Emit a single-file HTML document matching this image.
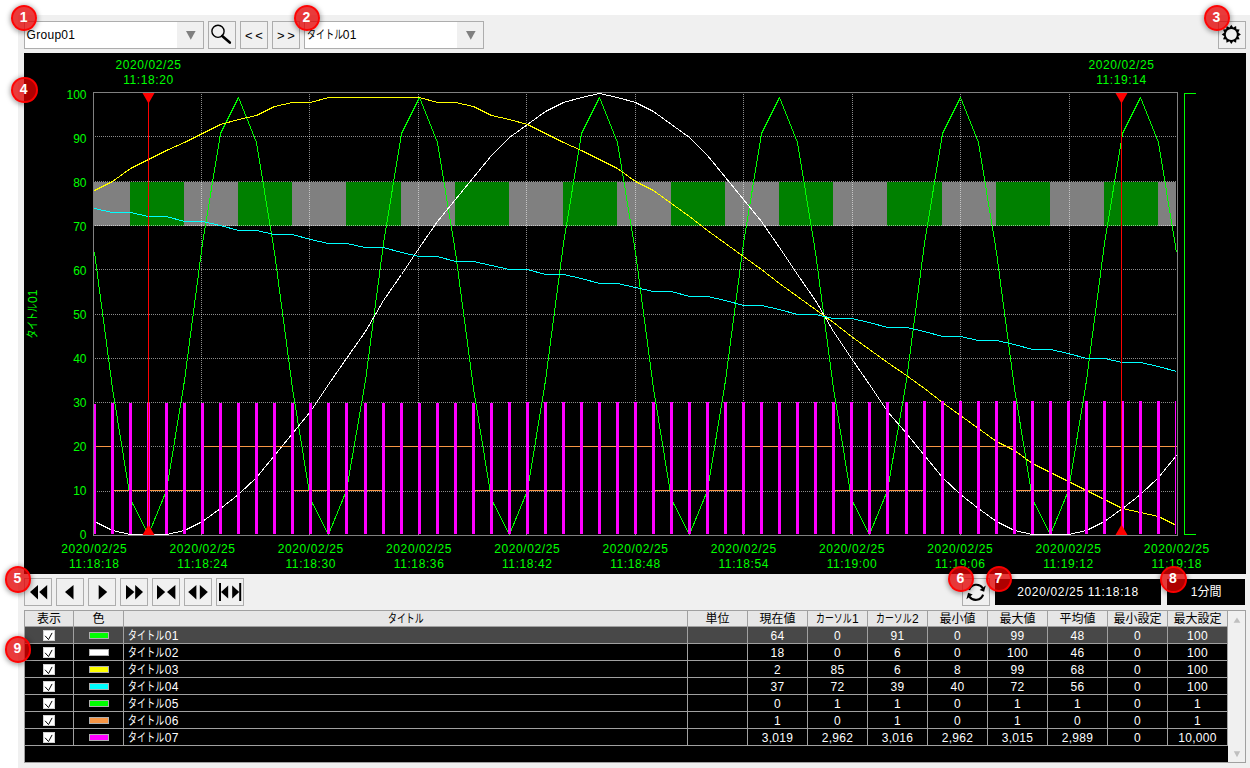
<!DOCTYPE html><html lang="ja"><head><meta charset="utf-8"><title>Trend</title><style>
html,body{margin:0;padding:0;}
body{width:1250px;height:768px;overflow:hidden;background:#fff;position:relative;
 font-family:"Liberation Sans","Noto Sans CJK JP",sans-serif;font-size:12px;color:#000;}
.abs{position:absolute;box-sizing:border-box;}
#panel{left:18px;top:15px;width:1232px;height:753px;background:#f0f0f0;}
.combo{background:#fff;border:1px solid #adadad;height:28px;line-height:27px;padding-left:1.5px;white-space:nowrap;letter-spacing:.3px;}
.combo .dd{position:absolute;right:0;top:0;width:26px;height:26px;background:#f0f0f0;}
.combo .dd svg{position:absolute;left:9px;top:9px;}
.btn{background:#f0f0f0;border:1px solid #adadad;width:28px;height:28px;}
.btn svg{position:absolute;left:0;top:0;}
.kana{display:inline-block;transform:scaleX(.74);transform-origin:0 50%;white-space:nowrap;}
.blk{background:#000;color:#fff;text-align:center;line-height:26px;height:26.4px;}
#chart{position:absolute;left:24px;top:53px;}
.badge{position:absolute;width:26.8px;height:26.8px;box-sizing:border-box;border-radius:50%;
 background:rgba(226,0,0,.77);border:2px solid rgba(255,0,0,.92);color:#fff;font-weight:bold;
 font-size:14px;line-height:20.8px;padding-right:1px;text-align:center;box-shadow:0 1px 5px 1px rgba(0,0,0,.35);}
#tbl{left:24px;top:610px;width:1222px;height:153px;background:#000;border:1px solid #a0a0a0;overflow:hidden;}
.hc{position:absolute;top:0;height:16px;box-sizing:border-box;background:#e6e6e6;border-right:1px solid #a0a0a0;
 border-bottom:1px solid #a0a0a0;text-align:center;line-height:17px;white-space:nowrap;overflow:hidden;}
.c{position:absolute;height:17px;box-sizing:border-box;border-right:1px solid #a0a0a0;border-bottom:1px solid #a0a0a0;
 color:#fff;text-align:center;line-height:18px;white-space:nowrap;overflow:hidden;letter-spacing:.3px;}
.c.l{text-align:left;padding-left:4px;}
.sel{background:#484848;}
.cb{position:absolute;left:18px;top:3px;width:12px;height:11px;background:#fff;border:1px solid #d0d0d0;box-sizing:border-box;}
.cb svg{position:absolute;left:0;top:0;}
.sw{position:absolute;left:15px;top:5px;width:20px;height:7px;box-sizing:border-box;border:1px solid #b0b0b0;}
#sb{left:1203px;top:0;width:18px;height:152px;background:#f0f0f0;position:absolute;}
</style></head><body>
<div id="panel" class="abs"></div>
<div class="abs combo" style="left:24px;top:21px;width:180px">Group01<span class="dd"><svg width="10" height="9" viewBox="0 0 10 9"><polygon points="0,0 9.6,0 4.8,8.8" fill="#808080"/></svg></span></div>
<div class="abs btn" style="left:208px;top:21px;width:28px;height:28px"><svg width="26" height="26" viewBox="0 0 26 26"><circle cx="9" cy="9.3" r="6.1" fill="none" stroke="#000" stroke-width="1.4"/><line x1="13.2" y1="14" x2="20.8" y2="20.6" stroke="#000" stroke-width="2.6" stroke-linecap="round"/></svg></div>
<div class="abs btn" style="left:240px;top:21px;font-size:13px;line-height:27px;text-align:center;letter-spacing:2.6px;padding-left:2.6px">&lt;&lt;</div>
<div class="abs btn" style="left:272px;top:21px;font-size:13px;line-height:27px;text-align:center;letter-spacing:2.6px;padding-left:2.6px">&gt;&gt;</div>
<div class="abs combo" style="left:304px;top:21px;width:180px"><span class="kana">タイトル</span><span style="margin-left:-13px">01</span><span class="dd"><svg width="10" height="9" viewBox="0 0 10 9"><polygon points="0,0 9.6,0 4.8,8.8" fill="#808080"/></svg></span></div>
<div class="abs btn" style="left:1218px;top:21px;width:28px;height:28px"><svg width="26" height="26" viewBox="0 0 26 26"><path d="M12.30,2.80 L14.16,5.45 L17.10,4.09 L17.39,7.31 L20.61,7.60 L19.25,10.54 L21.90,12.40 L19.25,14.26 L20.61,17.20 L17.39,17.49 L17.10,20.71 L14.16,19.35 L12.30,22.00 L10.44,19.35 L7.50,20.71 L7.21,17.49 L3.99,17.20 L5.35,14.26 L2.70,12.40 L5.35,10.54 L3.99,7.60 L7.21,7.31 L7.50,4.09 L10.44,5.45 Z M12.30,6.90 a5.5,5.5 0 1,0 0.01,0 Z" fill="#000" fill-rule="evenodd"/></svg></div>
<svg id="chart" width="1222" height="521" viewBox="24 53 1222 521" shape-rendering="crispEdges">
<rect x="24" y="53" width="1222" height="521" fill="#000"/>
<rect x="94" y="182" width="36" height="44" fill="#808080"/>
<rect x="130" y="182" width="54" height="44" fill="#008000"/>
<rect x="184" y="182" width="54" height="44" fill="#808080"/>
<rect x="238" y="182" width="54" height="44" fill="#008000"/>
<rect x="292" y="182" width="54" height="44" fill="#808080"/>
<rect x="346" y="182" width="55" height="44" fill="#008000"/>
<rect x="401" y="182" width="54" height="44" fill="#808080"/>
<rect x="455" y="182" width="54" height="44" fill="#008000"/>
<rect x="509" y="182" width="54" height="44" fill="#808080"/>
<rect x="563" y="182" width="54" height="44" fill="#008000"/>
<rect x="617" y="182" width="54" height="44" fill="#808080"/>
<rect x="671" y="182" width="54" height="44" fill="#008000"/>
<rect x="725" y="182" width="54" height="44" fill="#808080"/>
<rect x="779" y="182" width="54" height="44" fill="#008000"/>
<rect x="833" y="182" width="54" height="44" fill="#808080"/>
<rect x="887" y="182" width="55" height="44" fill="#008000"/>
<rect x="942" y="182" width="54" height="44" fill="#808080"/>
<rect x="996" y="182" width="54" height="44" fill="#008000"/>
<rect x="1050" y="182" width="54" height="44" fill="#808080"/>
<rect x="1104" y="182" width="54" height="44" fill="#008000"/>
<rect x="1158" y="182" width="18" height="44" fill="#808080"/>
<line x1="95" y1="491.5" x2="1177" y2="491.5" stroke="rgba(255,255,255,.55)" stroke-width="1" stroke-dasharray="1 1"/>
<line x1="95" y1="446.5" x2="1177" y2="446.5" stroke="rgba(255,255,255,.55)" stroke-width="1" stroke-dasharray="1 1"/>
<line x1="95" y1="402.5" x2="1177" y2="402.5" stroke="rgba(255,255,255,.55)" stroke-width="1" stroke-dasharray="1 1"/>
<line x1="95" y1="358.5" x2="1177" y2="358.5" stroke="rgba(255,255,255,.55)" stroke-width="1" stroke-dasharray="1 1"/>
<line x1="95" y1="314.5" x2="1177" y2="314.5" stroke="rgba(255,255,255,.55)" stroke-width="1" stroke-dasharray="1 1"/>
<line x1="95" y1="269.5" x2="1177" y2="269.5" stroke="rgba(255,255,255,.55)" stroke-width="1" stroke-dasharray="1 1"/>
<line x1="95" y1="225.5" x2="1177" y2="225.5" stroke="rgba(255,255,255,.55)" stroke-width="1" stroke-dasharray="1 1"/>
<line x1="95" y1="181.5" x2="1177" y2="181.5" stroke="rgba(255,255,255,.55)" stroke-width="1" stroke-dasharray="1 1"/>
<line x1="95" y1="136.5" x2="1177" y2="136.5" stroke="rgba(255,255,255,.55)" stroke-width="1" stroke-dasharray="1 1"/>
<line x1="201.5" y1="94" x2="201.5" y2="535" stroke="rgba(255,255,255,.55)" stroke-width="1" stroke-dasharray="1 1"/>
<line x1="309.5" y1="94" x2="309.5" y2="535" stroke="rgba(255,255,255,.55)" stroke-width="1" stroke-dasharray="1 1"/>
<line x1="418.5" y1="94" x2="418.5" y2="535" stroke="rgba(255,255,255,.55)" stroke-width="1" stroke-dasharray="1 1"/>
<line x1="526.5" y1="94" x2="526.5" y2="535" stroke="rgba(255,255,255,.55)" stroke-width="1" stroke-dasharray="1 1"/>
<line x1="635.5" y1="94" x2="635.5" y2="535" stroke="rgba(255,255,255,.55)" stroke-width="1" stroke-dasharray="1 1"/>
<line x1="743.5" y1="94" x2="743.5" y2="535" stroke="rgba(255,255,255,.55)" stroke-width="1" stroke-dasharray="1 1"/>
<line x1="852.5" y1="94" x2="852.5" y2="535" stroke="rgba(255,255,255,.55)" stroke-width="1" stroke-dasharray="1 1"/>
<line x1="960.5" y1="94" x2="960.5" y2="535" stroke="rgba(255,255,255,.55)" stroke-width="1" stroke-dasharray="1 1"/>
<line x1="1069.5" y1="94" x2="1069.5" y2="535" stroke="rgba(255,255,255,.55)" stroke-width="1" stroke-dasharray="1 1"/>
<polyline points="94.5,252.5 112.5,388.5 130.5,499.5 148.5,534.5 166.5,490.5 184.5,380.5 202.5,243.5 220.5,133.5 238.5,97.5 256.5,142.5 274.5,252.5 292.5,388.5 310.5,499.5 328.5,534.5 346.5,490.5 365.5,380.5 383.5,243.5 401.5,133.5 419.5,97.5 437.5,142.5 455.5,252.5 473.5,388.5 491.5,499.5 509.5,534.5 527.5,490.5 545.5,380.5 563.5,243.5 581.5,133.5 599.5,97.5 617.5,142.5 635.5,252.5 653.5,388.5 671.5,499.5 689.5,534.5 707.5,490.5 725.5,380.5 743.5,243.5 761.5,133.5 779.5,97.5 797.5,142.5 815.5,252.5 833.5,388.5 851.5,499.5 869.5,534.5 887.5,490.5 906.5,380.5 924.5,243.5 942.5,133.5 960.5,97.5 978.5,142.5 996.5,252.5 1014.5,388.5 1032.5,499.5 1050.5,534.5 1068.5,490.5 1086.5,380.5 1104.5,243.5 1122.5,133.5 1140.5,97.5 1158.5,142.5 1176.5,252.5" fill="none" stroke="#00ff00" stroke-width="1" stroke-linejoin="bevel" />
<polyline points="94.5,521.5 112.5,530.5 130.5,534.5 148.5,534.5 166.5,534.5 184.5,530.5 202.5,521.5 220.5,508.5 238.5,494.5 256.5,477.5 274.5,455.5 292.5,433.5 310.5,411.5 328.5,384.5 346.5,358.5 365.5,331.5 383.5,300.5 401.5,274.5 419.5,247.5 437.5,221.5 455.5,199.5 473.5,177.5 491.5,155.5 509.5,137.5 527.5,124.5 545.5,111.5 563.5,102.5 581.5,97.5 599.5,93.5 617.5,97.5 635.5,102.5 653.5,111.5 671.5,124.5 689.5,137.5 707.5,155.5 725.5,177.5 743.5,199.5 761.5,221.5 779.5,247.5 797.5,274.5 815.5,300.5 833.5,331.5 851.5,358.5 869.5,384.5 887.5,411.5 906.5,433.5 924.5,455.5 942.5,477.5 960.5,494.5 978.5,508.5 996.5,521.5 1014.5,530.5 1032.5,534.5 1050.5,534.5 1068.5,534.5 1086.5,530.5 1104.5,521.5 1122.5,508.5 1140.5,494.5 1158.5,477.5 1176.5,455.5" fill="none" stroke="#ffffff" stroke-width="1" stroke-linejoin="bevel" />
<polyline points="94.5,190.5 112.5,181.5 130.5,168.5 148.5,159.5 166.5,150.5 184.5,142.5 202.5,133.5 220.5,124.5 238.5,119.5 256.5,115.5 274.5,106.5 292.5,102.5 310.5,102.5 328.5,97.5 346.5,97.5 365.5,97.5 383.5,97.5 401.5,97.5 419.5,97.5 437.5,102.5 455.5,102.5 473.5,106.5 491.5,115.5 509.5,119.5 527.5,124.5 545.5,133.5 563.5,142.5 581.5,150.5 599.5,159.5 617.5,168.5 635.5,181.5 653.5,190.5 671.5,203.5 689.5,216.5 707.5,230.5 725.5,243.5 743.5,256.5 761.5,269.5 779.5,283.5 797.5,296.5 815.5,309.5 833.5,322.5 851.5,336.5 869.5,349.5 887.5,362.5 906.5,375.5 924.5,388.5 942.5,402.5 960.5,415.5 978.5,428.5 996.5,441.5 1014.5,450.5 1032.5,463.5 1050.5,472.5 1068.5,481.5 1086.5,490.5 1104.5,499.5 1122.5,508.5 1140.5,512.5 1158.5,516.5 1176.5,525.5" fill="none" stroke="#ffff00" stroke-width="1" stroke-linejoin="bevel" />
<polyline points="94.5,208.5 112.5,212.5 130.5,212.5 148.5,216.5 166.5,216.5 184.5,221.5 202.5,221.5 220.5,225.5 238.5,230.5 256.5,230.5 274.5,234.5 292.5,234.5 310.5,239.5 328.5,243.5 346.5,243.5 365.5,247.5 383.5,247.5 401.5,252.5 419.5,256.5 437.5,256.5 455.5,261.5 473.5,261.5 491.5,265.5 509.5,269.5 527.5,269.5 545.5,274.5 563.5,274.5 581.5,278.5 599.5,283.5 617.5,283.5 635.5,287.5 653.5,291.5 671.5,291.5 689.5,296.5 707.5,296.5 725.5,300.5 743.5,305.5 761.5,305.5 779.5,309.5 797.5,314.5 815.5,314.5 833.5,318.5 851.5,318.5 869.5,322.5 887.5,327.5 906.5,327.5 924.5,331.5 942.5,336.5 960.5,336.5 978.5,340.5 996.5,340.5 1014.5,344.5 1032.5,349.5 1050.5,349.5 1068.5,353.5 1086.5,358.5 1104.5,358.5 1122.5,362.5 1140.5,362.5 1158.5,366.5 1176.5,371.5" fill="none" stroke="#00ffff" stroke-width="1" stroke-linejoin="bevel" />
<polyline points="94.5,446.5 112.5,446.5 112.5,490.5 202.5,490.5 202.5,446.5 292.5,446.5 292.5,490.5 383.5,490.5 383.5,446.5 473.5,446.5 473.5,490.5 563.5,490.5 563.5,446.5 653.5,446.5 653.5,490.5 743.5,490.5 743.5,446.5 833.5,446.5 833.5,490.5 924.5,490.5 924.5,446.5 1014.5,446.5 1014.5,490.5 1104.5,490.5 1104.5,446.5 1176.5,446.5" fill="none" stroke="#f79646" stroke-width="1" stroke-linejoin="bevel" />
<rect x="94" y="404" width="2" height="130" fill="#ff00ff"/>
<rect x="111" y="403" width="3" height="131" fill="#ff00ff"/>
<rect x="129" y="403" width="3" height="131" fill="#ff00ff"/>
<rect x="147" y="403" width="3" height="131" fill="#ff00ff"/>
<rect x="165" y="403" width="3" height="131" fill="#ff00ff"/>
<rect x="183" y="403" width="3" height="131" fill="#ff00ff"/>
<rect x="201" y="403" width="3" height="131" fill="#ff00ff"/>
<rect x="219" y="403" width="3" height="131" fill="#ff00ff"/>
<rect x="237" y="403" width="3" height="131" fill="#ff00ff"/>
<rect x="255" y="403" width="3" height="131" fill="#ff00ff"/>
<rect x="273" y="403" width="3" height="131" fill="#ff00ff"/>
<rect x="291" y="403" width="3" height="131" fill="#ff00ff"/>
<rect x="309" y="403" width="3" height="131" fill="#ff00ff"/>
<rect x="327" y="403" width="3" height="131" fill="#ff00ff"/>
<rect x="345" y="403" width="3" height="131" fill="#ff00ff"/>
<rect x="364" y="403" width="3" height="131" fill="#ff00ff"/>
<rect x="382" y="403" width="3" height="131" fill="#ff00ff"/>
<rect x="400" y="403" width="3" height="131" fill="#ff00ff"/>
<rect x="418" y="403" width="3" height="131" fill="#ff00ff"/>
<rect x="436" y="403" width="3" height="131" fill="#ff00ff"/>
<rect x="454" y="403" width="3" height="131" fill="#ff00ff"/>
<rect x="472" y="403" width="3" height="131" fill="#ff00ff"/>
<rect x="490" y="403" width="3" height="131" fill="#ff00ff"/>
<rect x="508" y="402" width="3" height="132" fill="#ff00ff"/>
<rect x="526" y="402" width="3" height="132" fill="#ff00ff"/>
<rect x="544" y="402" width="3" height="132" fill="#ff00ff"/>
<rect x="562" y="402" width="3" height="132" fill="#ff00ff"/>
<rect x="580" y="402" width="3" height="132" fill="#ff00ff"/>
<rect x="598" y="402" width="3" height="132" fill="#ff00ff"/>
<rect x="616" y="402" width="3" height="132" fill="#ff00ff"/>
<rect x="634" y="402" width="3" height="132" fill="#ff00ff"/>
<rect x="652" y="402" width="3" height="132" fill="#ff00ff"/>
<rect x="670" y="402" width="3" height="132" fill="#ff00ff"/>
<rect x="688" y="402" width="3" height="132" fill="#ff00ff"/>
<rect x="706" y="402" width="3" height="132" fill="#ff00ff"/>
<rect x="724" y="402" width="3" height="132" fill="#ff00ff"/>
<rect x="742" y="402" width="3" height="132" fill="#ff00ff"/>
<rect x="760" y="402" width="3" height="132" fill="#ff00ff"/>
<rect x="778" y="402" width="3" height="132" fill="#ff00ff"/>
<rect x="796" y="402" width="3" height="132" fill="#ff00ff"/>
<rect x="814" y="402" width="3" height="132" fill="#ff00ff"/>
<rect x="832" y="402" width="3" height="132" fill="#ff00ff"/>
<rect x="850" y="402" width="3" height="132" fill="#ff00ff"/>
<rect x="868" y="402" width="3" height="132" fill="#ff00ff"/>
<rect x="886" y="402" width="3" height="132" fill="#ff00ff"/>
<rect x="905" y="402" width="3" height="132" fill="#ff00ff"/>
<rect x="923" y="401" width="3" height="133" fill="#ff00ff"/>
<rect x="941" y="401" width="3" height="133" fill="#ff00ff"/>
<rect x="959" y="401" width="3" height="133" fill="#ff00ff"/>
<rect x="977" y="401" width="3" height="133" fill="#ff00ff"/>
<rect x="995" y="401" width="3" height="133" fill="#ff00ff"/>
<rect x="1013" y="401" width="3" height="133" fill="#ff00ff"/>
<rect x="1031" y="401" width="3" height="133" fill="#ff00ff"/>
<rect x="1049" y="401" width="3" height="133" fill="#ff00ff"/>
<rect x="1067" y="401" width="3" height="133" fill="#ff00ff"/>
<rect x="1085" y="401" width="3" height="133" fill="#ff00ff"/>
<rect x="1103" y="401" width="3" height="133" fill="#ff00ff"/>
<rect x="1121" y="401" width="3" height="133" fill="#ff00ff"/>
<rect x="1139" y="401" width="3" height="133" fill="#ff00ff"/>
<rect x="1157" y="401" width="3" height="133" fill="#ff00ff"/>
<rect x="1175" y="401" width="1" height="133" fill="#ff00ff"/>
<rect x="93.5" y="92.5" width="1084" height="443" fill="none" stroke="#808080" stroke-width="1"/>
<rect x="148" y="93" width="1" height="442" fill="#ff0000"/>
<polygon points="142.5,93 154.5,93 148.5,103.5" fill="#ff0000" shape-rendering="auto"/>
<polygon points="142.5,535 154.5,535 148.5,524.5" fill="#ff0000" shape-rendering="auto"/>
<rect x="1121" y="93" width="1" height="442" fill="#ff0000"/>
<polygon points="1115.5,93 1127.5,93 1121.5,103.5" fill="#ff0000" shape-rendering="auto"/>
<polygon points="1115.5,535 1127.5,535 1121.5,524.5" fill="#ff0000" shape-rendering="auto"/>
<polyline points="1196,93.5 1184.5,93.5 1184.5,534.5 1196,534.5" fill="none" stroke="#00ff00" stroke-width="1"/>
<text x="86.5" y="538.9" text-anchor="end" font-family="Liberation Sans, sans-serif" font-size="12" fill="#00ff00" shape-rendering="auto">0</text>
<text x="86.5" y="494.9" text-anchor="end" font-family="Liberation Sans, sans-serif" font-size="12" fill="#00ff00" shape-rendering="auto">10</text>
<text x="86.5" y="450.9" text-anchor="end" font-family="Liberation Sans, sans-serif" font-size="12" fill="#00ff00" shape-rendering="auto">20</text>
<text x="86.5" y="406.9" text-anchor="end" font-family="Liberation Sans, sans-serif" font-size="12" fill="#00ff00" shape-rendering="auto">30</text>
<text x="86.5" y="362.9" text-anchor="end" font-family="Liberation Sans, sans-serif" font-size="12" fill="#00ff00" shape-rendering="auto">40</text>
<text x="86.5" y="318.9" text-anchor="end" font-family="Liberation Sans, sans-serif" font-size="12" fill="#00ff00" shape-rendering="auto">50</text>
<text x="86.5" y="274.9" text-anchor="end" font-family="Liberation Sans, sans-serif" font-size="12" fill="#00ff00" shape-rendering="auto">60</text>
<text x="86.5" y="230.9" text-anchor="end" font-family="Liberation Sans, sans-serif" font-size="12" fill="#00ff00" shape-rendering="auto">70</text>
<text x="86.5" y="186.9" text-anchor="end" font-family="Liberation Sans, sans-serif" font-size="12" fill="#00ff00" shape-rendering="auto">80</text>
<text x="86.5" y="142.9" text-anchor="end" font-family="Liberation Sans, sans-serif" font-size="12" fill="#00ff00" shape-rendering="auto">90</text>
<text x="86.5" y="98.9" text-anchor="end" font-family="Liberation Sans, sans-serif" font-size="12" fill="#00ff00" shape-rendering="auto">100</text>
<text x="94.3" y="553" text-anchor="middle" letter-spacing="0.6" font-family="Liberation Sans, sans-serif" font-size="12" fill="#00ff00" shape-rendering="auto">2020/02/25</text>
<text x="94.3" y="568" text-anchor="middle" letter-spacing="0.6" font-family="Liberation Sans, sans-serif" font-size="12" fill="#00ff00" shape-rendering="auto">11:18:18</text>
<text x="202.6" y="553" text-anchor="middle" letter-spacing="0.6" font-family="Liberation Sans, sans-serif" font-size="12" fill="#00ff00" shape-rendering="auto">2020/02/25</text>
<text x="202.6" y="568" text-anchor="middle" letter-spacing="0.6" font-family="Liberation Sans, sans-serif" font-size="12" fill="#00ff00" shape-rendering="auto">11:18:24</text>
<text x="310.8" y="553" text-anchor="middle" letter-spacing="0.6" font-family="Liberation Sans, sans-serif" font-size="12" fill="#00ff00" shape-rendering="auto">2020/02/25</text>
<text x="310.8" y="568" text-anchor="middle" letter-spacing="0.6" font-family="Liberation Sans, sans-serif" font-size="12" fill="#00ff00" shape-rendering="auto">11:18:30</text>
<text x="419.1" y="553" text-anchor="middle" letter-spacing="0.6" font-family="Liberation Sans, sans-serif" font-size="12" fill="#00ff00" shape-rendering="auto">2020/02/25</text>
<text x="419.1" y="568" text-anchor="middle" letter-spacing="0.6" font-family="Liberation Sans, sans-serif" font-size="12" fill="#00ff00" shape-rendering="auto">11:18:36</text>
<text x="527.3" y="553" text-anchor="middle" letter-spacing="0.6" font-family="Liberation Sans, sans-serif" font-size="12" fill="#00ff00" shape-rendering="auto">2020/02/25</text>
<text x="527.3" y="568" text-anchor="middle" letter-spacing="0.6" font-family="Liberation Sans, sans-serif" font-size="12" fill="#00ff00" shape-rendering="auto">11:18:42</text>
<text x="635.5" y="553" text-anchor="middle" letter-spacing="0.6" font-family="Liberation Sans, sans-serif" font-size="12" fill="#00ff00" shape-rendering="auto">2020/02/25</text>
<text x="635.5" y="568" text-anchor="middle" letter-spacing="0.6" font-family="Liberation Sans, sans-serif" font-size="12" fill="#00ff00" shape-rendering="auto">11:18:48</text>
<text x="743.8" y="553" text-anchor="middle" letter-spacing="0.6" font-family="Liberation Sans, sans-serif" font-size="12" fill="#00ff00" shape-rendering="auto">2020/02/25</text>
<text x="743.8" y="568" text-anchor="middle" letter-spacing="0.6" font-family="Liberation Sans, sans-serif" font-size="12" fill="#00ff00" shape-rendering="auto">11:18:54</text>
<text x="852.0" y="553" text-anchor="middle" letter-spacing="0.6" font-family="Liberation Sans, sans-serif" font-size="12" fill="#00ff00" shape-rendering="auto">2020/02/25</text>
<text x="852.0" y="568" text-anchor="middle" letter-spacing="0.6" font-family="Liberation Sans, sans-serif" font-size="12" fill="#00ff00" shape-rendering="auto">11:19:00</text>
<text x="960.3" y="553" text-anchor="middle" letter-spacing="0.6" font-family="Liberation Sans, sans-serif" font-size="12" fill="#00ff00" shape-rendering="auto">2020/02/25</text>
<text x="960.3" y="568" text-anchor="middle" letter-spacing="0.6" font-family="Liberation Sans, sans-serif" font-size="12" fill="#00ff00" shape-rendering="auto">11:19:06</text>
<text x="1068.5" y="553" text-anchor="middle" letter-spacing="0.6" font-family="Liberation Sans, sans-serif" font-size="12" fill="#00ff00" shape-rendering="auto">2020/02/25</text>
<text x="1068.5" y="568" text-anchor="middle" letter-spacing="0.6" font-family="Liberation Sans, sans-serif" font-size="12" fill="#00ff00" shape-rendering="auto">11:19:12</text>
<text x="1176.8" y="553" text-anchor="middle" letter-spacing="0.6" font-family="Liberation Sans, sans-serif" font-size="12" fill="#00ff00" shape-rendering="auto">2020/02/25</text>
<text x="1176.8" y="568" text-anchor="middle" letter-spacing="0.6" font-family="Liberation Sans, sans-serif" font-size="12" fill="#00ff00" shape-rendering="auto">11:19:18</text>
<text x="148.5" y="69" text-anchor="middle" letter-spacing="0.6" font-family="Liberation Sans, sans-serif" font-size="12" fill="#00ff00" shape-rendering="auto">2020/02/25</text>
<text x="148.5" y="84" text-anchor="middle" letter-spacing="0.6" font-family="Liberation Sans, sans-serif" font-size="12" fill="#00ff00" shape-rendering="auto">11:18:20</text>
<text x="1121.5" y="69" text-anchor="middle" letter-spacing="0.6" font-family="Liberation Sans, sans-serif" font-size="12" fill="#00ff00" shape-rendering="auto">2020/02/25</text>
<text x="1121.5" y="84" text-anchor="middle" letter-spacing="0.6" font-family="Liberation Sans, sans-serif" font-size="12" fill="#00ff00" shape-rendering="auto">11:19:14</text>
<text transform="translate(37,338.5) rotate(-90) scale(0.73,1)" font-family="Liberation Sans, Noto Sans CJK JP, sans-serif" font-size="12" fill="#00ff00" shape-rendering="auto">タイトル</text>
<text transform="translate(37,303) rotate(-90)" font-family="Liberation Sans, Noto Sans CJK JP, sans-serif" font-size="12" fill="#00ff00" shape-rendering="auto">01</text>
</svg>
<div class="abs btn" style="left:24px;top:578px;width:28px;height:28px"><svg width="26" height="26" viewBox="0 0 26 26"><g transform="translate(-1,-1)"><polygon points="6,14 14,7 14,21.4" fill="#000"/><polygon points="15.2,14 23.2,7 23.2,21.4" fill="#000"/></g></svg></div>
<div class="abs btn" style="left:56px;top:578px;width:28px;height:28px"><svg width="26" height="26" viewBox="0 0 26 26"><g transform="translate(-1,-1)"><polygon points="9,14 17.5,7 17.5,21.4" fill="#000"/></g></svg></div>
<div class="abs btn" style="left:88px;top:578px;width:28px;height:28px"><svg width="26" height="26" viewBox="0 0 26 26"><g transform="translate(-1,-1)"><polygon points="10.7,7 19.2,14 10.7,21.4" fill="#000"/></g></svg></div>
<div class="abs btn" style="left:120px;top:578px;width:28px;height:28px"><svg width="26" height="26" viewBox="0 0 26 26"><g transform="translate(-1,-1)"><polygon points="6,7 14.4,14 6,21.4" fill="#000"/><polygon points="15.2,7 23,14 15.2,21.4" fill="#000"/></g></svg></div>
<div class="abs btn" style="left:152px;top:578px;width:28px;height:28px"><svg width="26" height="26" viewBox="0 0 26 26"><g transform="translate(-1,-1)"><polygon points="5,7 13.2,14 5,21.4" fill="#000"/><polygon points="15,14 23.4,7 23.4,21.4" fill="#000"/></g></svg></div>
<div class="abs btn" style="left:184px;top:578px;width:28px;height:28px"><svg width="26" height="26" viewBox="0 0 26 26"><g transform="translate(-1,-1)"><polygon points="4.2,14 12.4,7 12.4,21.4" fill="#000"/><polygon points="15.8,7 23.8,14 15.8,21.4" fill="#000"/></g></svg></div>
<div class="abs btn" style="left:216px;top:578px;width:28px;height:28px"><svg width="26" height="26" viewBox="0 0 26 26"><g transform="translate(-1,-1)"><rect x="3" y="5" width="2" height="18"/><polygon points="5,14 12.2,7.4 12.2,20.6" fill="#000"/><polygon points="16.2,7.4 23.2,14 16.2,20.6" fill="#000"/><rect x="23.2" y="5" width="2" height="18"/></g></svg></div>
<div class="abs btn" style="left:962px;top:578px;width:28px;height:28px"><svg width="26" height="26" viewBox="0 0 26 26"><g transform="translate(.8,.5)"><path d="M5.3,10.5 A7.7,7.7 0 0 1 18.9,8.5" fill="none" stroke="#000" stroke-width="2.1"/><polygon points="22,5.9 20.3,12.3 15.8,10.6" fill="#000"/><path d="M19.3,15.1 A7.7,7.7 0 0 1 5.7,17.1" fill="none" stroke="#000" stroke-width="2.1"/><polygon points="2.6,19.7 4.3,13.3 8.8,15" fill="#000"/></g></svg></div>
<div class="abs blk" style="left:995px;top:579px;width:166px;letter-spacing:.65px">2020/02/25 11:18:18</div>
<div class="abs blk" style="left:1167px;top:579px;width:78.4px">1分間</div>
<div id="tbl" class="abs">
<div class="hc" style="left:0px;width:49px">表示</div>
<div class="hc" style="left:49px;width:50px">色</div>
<div class="hc" style="left:99px;width:564px"><span class="kana" style="margin-right:-12.5px">タイトル</span></div>
<div class="hc" style="left:663px;width:60px">単位</div>
<div class="hc" style="left:723px;width:60px">現在値</div>
<div class="hc" style="left:783px;width:60px"><span class="kana" style="margin-right:-12.5px">カーソル</span>1</div>
<div class="hc" style="left:843px;width:60px"><span class="kana" style="margin-right:-12.5px">カーソル</span>2</div>
<div class="hc" style="left:903px;width:60px">最小値</div>
<div class="hc" style="left:963px;width:60px">最大値</div>
<div class="hc" style="left:1023px;width:60px">平均値</div>
<div class="hc" style="left:1083px;width:60px">最小設定</div>
<div class="hc" style="left:1143px;width:60px">最大設定</div>
<div class="c sel" style="left:0px;top:16px;width:49px"><span class="cb"><svg width="10" height="9" viewBox="0 0 10 9"><polyline points="1.1,4.8 4.5,8.6 8.1,1.9" fill="none" stroke="#000" stroke-width="1"/></svg></span></div>
<div class="c sel" style="left:49px;top:16px;width:50px"><span class="sw" style="background:#00ff00"></span></div>
<div class="c sel l" style="left:99px;top:16px;width:564px"><span class="kana" style="margin-right:-12.5px">タイトル</span>01</div>
<div class="c sel" style="left:663px;top:16px;width:60px"></div>
<div class="c sel" style="left:723px;top:16px;width:60px">64</div>
<div class="c sel" style="left:783px;top:16px;width:60px">0</div>
<div class="c sel" style="left:843px;top:16px;width:60px">91</div>
<div class="c sel" style="left:903px;top:16px;width:60px">0</div>
<div class="c sel" style="left:963px;top:16px;width:60px">99</div>
<div class="c sel" style="left:1023px;top:16px;width:60px">48</div>
<div class="c sel" style="left:1083px;top:16px;width:60px">0</div>
<div class="c sel" style="left:1143px;top:16px;width:60px">100</div>
<div class="c" style="left:0px;top:33px;width:49px"><span class="cb"><svg width="10" height="9" viewBox="0 0 10 9"><polyline points="1.1,4.8 4.5,8.6 8.1,1.9" fill="none" stroke="#000" stroke-width="1"/></svg></span></div>
<div class="c" style="left:49px;top:33px;width:50px"><span class="sw" style="background:#ffffff"></span></div>
<div class="c l" style="left:99px;top:33px;width:564px"><span class="kana" style="margin-right:-12.5px">タイトル</span>02</div>
<div class="c" style="left:663px;top:33px;width:60px"></div>
<div class="c" style="left:723px;top:33px;width:60px">18</div>
<div class="c" style="left:783px;top:33px;width:60px">0</div>
<div class="c" style="left:843px;top:33px;width:60px">6</div>
<div class="c" style="left:903px;top:33px;width:60px">0</div>
<div class="c" style="left:963px;top:33px;width:60px">100</div>
<div class="c" style="left:1023px;top:33px;width:60px">46</div>
<div class="c" style="left:1083px;top:33px;width:60px">0</div>
<div class="c" style="left:1143px;top:33px;width:60px">100</div>
<div class="c" style="left:0px;top:50px;width:49px"><span class="cb"><svg width="10" height="9" viewBox="0 0 10 9"><polyline points="1.1,4.8 4.5,8.6 8.1,1.9" fill="none" stroke="#000" stroke-width="1"/></svg></span></div>
<div class="c" style="left:49px;top:50px;width:50px"><span class="sw" style="background:#ffff00"></span></div>
<div class="c l" style="left:99px;top:50px;width:564px"><span class="kana" style="margin-right:-12.5px">タイトル</span>03</div>
<div class="c" style="left:663px;top:50px;width:60px"></div>
<div class="c" style="left:723px;top:50px;width:60px">2</div>
<div class="c" style="left:783px;top:50px;width:60px">85</div>
<div class="c" style="left:843px;top:50px;width:60px">6</div>
<div class="c" style="left:903px;top:50px;width:60px">8</div>
<div class="c" style="left:963px;top:50px;width:60px">99</div>
<div class="c" style="left:1023px;top:50px;width:60px">68</div>
<div class="c" style="left:1083px;top:50px;width:60px">0</div>
<div class="c" style="left:1143px;top:50px;width:60px">100</div>
<div class="c" style="left:0px;top:67px;width:49px"><span class="cb"><svg width="10" height="9" viewBox="0 0 10 9"><polyline points="1.1,4.8 4.5,8.6 8.1,1.9" fill="none" stroke="#000" stroke-width="1"/></svg></span></div>
<div class="c" style="left:49px;top:67px;width:50px"><span class="sw" style="background:#00ffff"></span></div>
<div class="c l" style="left:99px;top:67px;width:564px"><span class="kana" style="margin-right:-12.5px">タイトル</span>04</div>
<div class="c" style="left:663px;top:67px;width:60px"></div>
<div class="c" style="left:723px;top:67px;width:60px">37</div>
<div class="c" style="left:783px;top:67px;width:60px">72</div>
<div class="c" style="left:843px;top:67px;width:60px">39</div>
<div class="c" style="left:903px;top:67px;width:60px">40</div>
<div class="c" style="left:963px;top:67px;width:60px">72</div>
<div class="c" style="left:1023px;top:67px;width:60px">56</div>
<div class="c" style="left:1083px;top:67px;width:60px">0</div>
<div class="c" style="left:1143px;top:67px;width:60px">100</div>
<div class="c" style="left:0px;top:84px;width:49px"><span class="cb"><svg width="10" height="9" viewBox="0 0 10 9"><polyline points="1.1,4.8 4.5,8.6 8.1,1.9" fill="none" stroke="#000" stroke-width="1"/></svg></span></div>
<div class="c" style="left:49px;top:84px;width:50px"><span class="sw" style="background:#00ff00"></span></div>
<div class="c l" style="left:99px;top:84px;width:564px"><span class="kana" style="margin-right:-12.5px">タイトル</span>05</div>
<div class="c" style="left:663px;top:84px;width:60px"></div>
<div class="c" style="left:723px;top:84px;width:60px">0</div>
<div class="c" style="left:783px;top:84px;width:60px">1</div>
<div class="c" style="left:843px;top:84px;width:60px">1</div>
<div class="c" style="left:903px;top:84px;width:60px">0</div>
<div class="c" style="left:963px;top:84px;width:60px">1</div>
<div class="c" style="left:1023px;top:84px;width:60px">1</div>
<div class="c" style="left:1083px;top:84px;width:60px">0</div>
<div class="c" style="left:1143px;top:84px;width:60px">1</div>
<div class="c" style="left:0px;top:101px;width:49px"><span class="cb"><svg width="10" height="9" viewBox="0 0 10 9"><polyline points="1.1,4.8 4.5,8.6 8.1,1.9" fill="none" stroke="#000" stroke-width="1"/></svg></span></div>
<div class="c" style="left:49px;top:101px;width:50px"><span class="sw" style="background:#f79646"></span></div>
<div class="c l" style="left:99px;top:101px;width:564px"><span class="kana" style="margin-right:-12.5px">タイトル</span>06</div>
<div class="c" style="left:663px;top:101px;width:60px"></div>
<div class="c" style="left:723px;top:101px;width:60px">1</div>
<div class="c" style="left:783px;top:101px;width:60px">0</div>
<div class="c" style="left:843px;top:101px;width:60px">1</div>
<div class="c" style="left:903px;top:101px;width:60px">0</div>
<div class="c" style="left:963px;top:101px;width:60px">1</div>
<div class="c" style="left:1023px;top:101px;width:60px">0</div>
<div class="c" style="left:1083px;top:101px;width:60px">0</div>
<div class="c" style="left:1143px;top:101px;width:60px">1</div>
<div class="c" style="left:0px;top:118px;width:49px"><span class="cb"><svg width="10" height="9" viewBox="0 0 10 9"><polyline points="1.1,4.8 4.5,8.6 8.1,1.9" fill="none" stroke="#000" stroke-width="1"/></svg></span></div>
<div class="c" style="left:49px;top:118px;width:50px"><span class="sw" style="background:#ff00ff"></span></div>
<div class="c l" style="left:99px;top:118px;width:564px"><span class="kana" style="margin-right:-12.5px">タイトル</span>07</div>
<div class="c" style="left:663px;top:118px;width:60px"></div>
<div class="c" style="left:723px;top:118px;width:60px">3,019</div>
<div class="c" style="left:783px;top:118px;width:60px">2,962</div>
<div class="c" style="left:843px;top:118px;width:60px">3,016</div>
<div class="c" style="left:903px;top:118px;width:60px">2,962</div>
<div class="c" style="left:963px;top:118px;width:60px">3,015</div>
<div class="c" style="left:1023px;top:118px;width:60px">2,989</div>
<div class="c" style="left:1083px;top:118px;width:60px">0</div>
<div class="c" style="left:1143px;top:118px;width:60px">10,000</div>
<div id="sb"><svg width="18" height="152" viewBox="0 0 18 152"><polygon points="5.6,11.8 12.4,11.8 9,6.4" fill="#bfbfbf"/><polygon points="5.8,140.2 12.2,140.2 9,146.2" fill="#bfbfbf"/></svg></div>
</div>
<div class="badge" style="left:10.7px;top:4.7px">1</div>
<div class="badge" style="left:293.6px;top:4.5px">2</div>
<div class="badge" style="left:1203.5px;top:4.5px">3</div>
<div class="badge" style="left:10.8px;top:76.7px">4</div>
<div class="badge" style="left:4.6px;top:565.8px">5</div>
<div class="badge" style="left:947.6px;top:565.7px">6</div>
<div class="badge" style="left:985.6px;top:565.7px">7</div>
<div class="badge" style="left:1159.9px;top:565.9px">8</div>
<div class="badge" style="left:4.6px;top:635.8px">9</div>
</body></html>
